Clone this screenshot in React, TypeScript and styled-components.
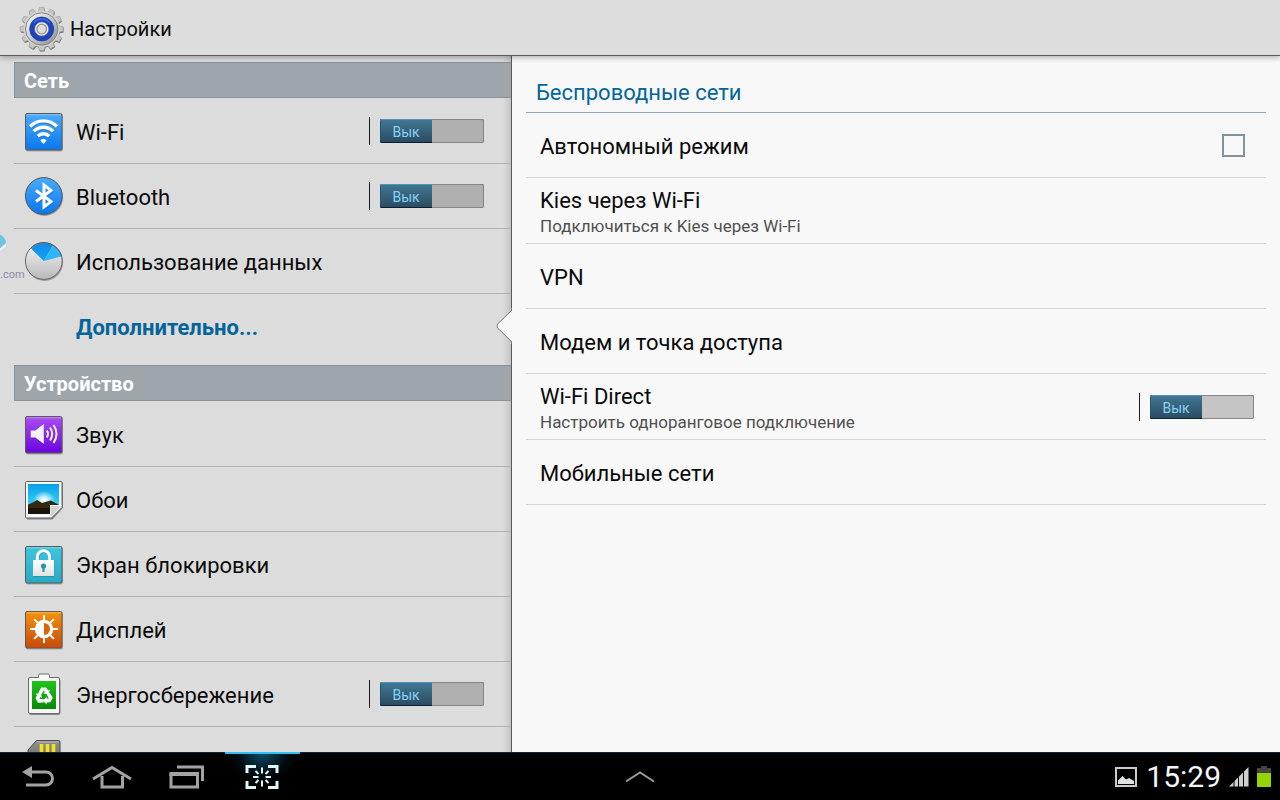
import React, { useState } from 'react';
import styled, { createGlobalStyle, css } from 'styled-components';

const GlobalStyle = createGlobalStyle`
  * { box-sizing: border-box; }
  body {
    margin: 0;
    background: #000;
    font-family: Roboto, "Noto Sans", sans-serif;
    color: #0a0a0a;
  }
  button { font-family: inherit; border: 0; padding: 0; margin: 0; background: none; cursor: pointer; }
  a { color: inherit; text-decoration: none; }
  ul { list-style: none; margin: 0; padding: 0; }
  h1, h2, p { margin: 0; }
  svg { display: block; flex: none; }
`;

const Screen = styled.div`
  display: flex;
  flex-direction: column;
  height: 100vh;
  position: relative;
  overflow: hidden;
`;

const TopBar = styled.header`
  flex: none;
  height: 56px;
  display: flex;
  align-items: center;
  gap: 6px;
  padding: 0 18px;
  background: #dddddd;
  border-bottom: 1px solid #5c5c5c;
  box-shadow: 0 1px 6px rgba(0, 0, 0, 0.35);
  position: relative;
  z-index: 2;
`;

const AppTitle = styled.h1`
  font-size: 20px;
  line-height: 24px;
  font-weight: 400;
  padding-top: 2px;
`;

const Panels = styled.div`
  flex: 1;
  min-height: 0;
  display: flex;
`;

const Sidebar = styled.nav`
  flex: 0 0 40%;
  padding-left: 14px;
  background: linear-gradient(to left, #5a5a5a 1px, #c4c4c4 1px, #dcdcdc 9px);
  overflow: hidden;
`;

const SectionTitle = styled.h2`
  height: 36px;
  margin: 6px 1px 1px 0;
  padding: 2px 0 0 9px;
  display: flex;
  align-items: center;
  background: #9ea6ac;
  border: 1px solid #879397;
  border-right: 0;
  color: #fff;
  font-size: 20px;
  line-height: 24px;
  font-weight: 700;
`;

const SidebarRow = styled.li<{ $last?: boolean }>`
  position: relative;
  height: 65px;
  margin-right: 1px;
  padding: 0 27px 0 10px;
  display: flex;
  align-items: center;
  border-bottom: 1px solid ${(p) => (p.$last ? 'transparent' : '#b0b0b0')};
`;

const ItemLink = styled.a<{ $active?: boolean }>`
  flex: 1;
  display: flex;
  align-items: center;
  gap: 12px;
  font-size: 22px;
  line-height: 28px;
  ${(p) => p.$active && css`
    color: #05659b;
    font-weight: 700;
  `}
`;

const ItemLabel = styled.span`
  padding-top: 4px;
`;

const IconSlot = styled.span`
  width: 40px;
  flex: none;
`;

const Pointer = styled.svg`
  position: absolute;
  right: -1px;
  top: 14px;
`;

const SwitchGroup = styled.div`
  display: flex;
  align-items: center;
  gap: 10px;
`;

const SwitchRule = styled.span`
  width: 1px;
  height: 28px;
  background: #1c1f22;
`;

const SwitchTrack = styled.button<{ $on: boolean; $light?: boolean }>`
  width: 104px;
  height: 24px;
  display: flex;
  justify-content: ${(p) => (p.$on ? 'flex-end' : 'flex-start')};
  border-radius: 2px;
  background: ${(p) => (p.$light ? '#c5c5c5' : '#afafaf')};
  box-shadow: inset 0 0 0 1px #858585, inset 0 1px 0 #6c6c6c;
`;

const SwitchThumb = styled.span`
  width: 52px;
  height: 24px;
  border-radius: 2px 0 0 2px;
  background: linear-gradient(#43789a, #3b6a84 30%, #2a4a60);
  box-shadow: inset 0 1px 0 #4f93b5, inset 0 -1px 0 #0c1e30, inset 1px 0 0 #1d5577;
  color: #86d3f7;
  font-size: 14px;
  line-height: 26px;
  text-align: center;
`;

const Detail = styled.main`
  flex: 1;
  min-width: 0;
  padding: 0 14px;
  background: #f8f8f8;
`;

const DetailTitle = styled.h2`
  height: 57px;
  padding: 0 10px 5px;
  display: flex;
  align-items: flex-end;
  border-bottom: 1px solid #8fa9b9;
  color: #05659b;
  font-size: 22px;
  line-height: 28px;
  font-weight: 400;
`;

const DetailRow = styled.li<{ $double?: boolean }>`
  height: ${(p) => (p.$double ? 66 : 65)}px;
  padding: 0 12px 0 14px;
  display: flex;
  align-items: center;
  border-bottom: 1px solid #d6d6d6;
`;

const detailText = css<{ $double?: boolean }>`
  flex: 1;
  padding-top: ${(p) => (p.$double ? 2 : 4)}px;
  font-size: 22px;
  line-height: 28px;
`;

const DetailLink = styled.a<{ $double?: boolean }>`
  ${detailText}
`;

const DetailLabel = styled.label<{ $double?: boolean }>`
  ${detailText}
`;

const Summary = styled.p`
  font-size: 17px;
  line-height: 22px;
  color: #505050;
`;

const CheckBox = styled.input`
  appearance: none;
  width: 23px;
  height: 23px;
  margin: 0 9px 0 0;
  border: 2px solid #84929b;
  &:checked { background: #84929b; }
`;

const SystemBar = styled.footer`
  flex: none;
  height: 48px;
  display: grid;
  grid-template-columns: 1fr auto 1fr;
  background: #000;
  box-shadow: inset 0 1px 0 #06243a;
  position: relative;
  z-index: 2;
`;

const NavKeys = styled.div`
  display: flex;
`;

const NavKey = styled.button<{ $lit?: boolean }>`
  width: 75px;
  height: 48px;
  display: flex;
  align-items: center;
  justify-content: center;
  padding: 2px 1px 0 0;
  ${(p) => p.$lit && css`
    background: radial-gradient(ellipse 36px 32px at 50% 0, #0d4f6c, rgba(0, 20, 30, 0.5) 70%, transparent);
    box-shadow: inset 0 2px 0 #2fbff2;
  `}
`;

const Status = styled.div`
  display: flex;
  align-items: center;
  justify-content: flex-end;
  padding: 2px 9px 0 0;
  gap: 8px;
`;

const Clock = styled.time`
  color: #f2f6f6;
  font-size: 30px;
  line-height: 36px;
  padding-left: 1px;
`;

const Watermark = styled.div`
  position: absolute;
  left: 0;
  top: 232px;
  z-index: 1;
  pointer-events: none;
  color: #8589aa;
  font-size: 11px;
  line-height: 14px;
`;

const WatermarkText = styled.span`
  display: block;
  padding-top: 16px;
`;

function Switch({ label, light }: { label: string; light?: boolean }) {
  const [on, setOn] = useState(false);
  return (
    <SwitchGroup>
      <SwitchRule />
      <SwitchTrack type="button" role="switch" aria-checked={on} aria-label={label} $on={on} $light={light} onClick={() => setOn(!on)}>
        <SwitchThumb>{on ? 'Вкл' : 'Вык'}</SwitchThumb>
      </SwitchTrack>
    </SwitchGroup>
  );
}

const HiddenDefs = styled.svg`
  position: absolute;
`;

function IconDefs() {
  const grads: [string, string, string][] = [
    ['gBlue', '#4aabff', '#0878ea'],
    ['gPurple', '#a950f4', '#6a04dc'],
    ['gCyan', '#3ec6de', '#28a9c6'],
    ['gOrange', '#f5920a', '#c74a0c'],
    ['gGreen', '#22c41c', '#078a08'],
    ['gGrey', '#f4f4f4', '#b9b9b9'],
    ['gSky', '#0a9fe6', '#35d4fb'],
    ['gPie', '#1589ea', '#0ba6f6'],
    ['gWhite', '#ffffff', '#e2e2e2'],
    ['gCard', '#8f8f8f', '#555555'],
  ];
  return (
    <HiddenDefs width="0" height="0" aria-hidden="true">
      <defs>
        {grads.map(([id, a, b]) => (
          <linearGradient key={id} id={id} x1="0" y1="0" x2="0" y2="1">
            <stop offset="0" stopColor={a} />
            <stop offset="1" stopColor={b} />
          </linearGradient>
        ))}
        <linearGradient id="gMetal" x1="0" y1="0" x2="1" y2="1">
          <stop offset="0" stopColor="#fbfbfb" />
          <stop offset="0.5" stopColor="#c9c9c9" />
          <stop offset="1" stopColor="#8b8b8b" />
        </linearGradient>
        <radialGradient id="gSun">
          <stop offset="0" stopColor="#fff" />
          <stop offset="0.3" stopColor="#fff" stopOpacity="0.8" />
          <stop offset="1" stopColor="#fff" stopOpacity="0" />
        </radialGradient>
      </defs>
    </HiddenDefs>
  );
}

function GearIcon() {
  const teeth = Array.from({ length: 12 }, (_, i) => i * 30);
  return (
    <svg width="46" height="48" viewBox="0 0 46 48" aria-hidden="true">
      <g transform="translate(24.2 26.2)" fill="#6f6f6f">
        {teeth.map((a) => <path key={a} transform={`rotate(${a})`} d="M-3.6-16 -2.4-21.4H2.4L3.6-16Z" />)}
        <circle r="17.6" />
      </g>
      <g transform="translate(23.7 25)">
        <g fill="#c6c6c6" stroke="#979797" strokeWidth="0.6">
          {teeth.map((a) => <path key={a} transform={`rotate(${a})`} d="M-3.6-16 -2.2-21.6H2.2L3.6-16Z" />)}
        </g>
        <circle r="18" fill="#d2d2d2" />
        <circle r="16.2" fill="url(#gMetal)" stroke="#858585" strokeWidth="1" />
        <circle r="12" fill="#1b43c2" stroke="#2b438c" strokeWidth="0.8" />
        <path d="M-8-6A10 10 0 0 1 8-6" fill="none" stroke="#3b6be0" strokeWidth="1.6" />
        <circle r="7" fill="#f0f0f0" stroke="#7b7f92" strokeWidth="0.6" />
        <circle r="4.8" fill="#dedede" stroke="#9b9388" strokeWidth="1.3" />
      </g>
    </svg>
  );
}

function Tile({ fill, children }: { fill: string; children: React.ReactNode }) {
  return (
    <svg width="40" height="44" viewBox="0 0 40 44" aria-hidden="true">
      <rect x="2" y="5.5" width="37" height="37" rx="2" fill="#8b8b8b" opacity="0.7" />
      <rect x="1.5" y="4.5" width="36.5" height="36.5" rx="1.5" fill={`url(#${fill})`} stroke="#5f5a55" />
      <path d="M2.5 5.8H37" stroke="#fff" strokeOpacity="0.35" />
      {children}
    </svg>
  );
}

const WifiIcon = () => (
  <Tile fill="gBlue">
    <g fill="none" stroke="#1568bd" strokeOpacity="0.5" strokeWidth="3.6" transform="translate(0 1)">
      <path d="M6 17.5a19 19 0 0 1 27 0M9.8 22.4a13.4 13.4 0 0 1 19.4 0M13.8 27.2a8 8 0 0 1 11.4 0" />
    </g>
    <g fill="none" stroke="#fff" strokeWidth="3.4">
      <path d="M6 17.5a19 19 0 0 1 27 0M9.8 22.4a13.4 13.4 0 0 1 19.4 0M13.8 27.2a8 8 0 0 1 11.4 0" />
    </g>
    <path d="M16.4 31.4a4 4 0 0 1 6.2 0L19.500 35Z" fill="#fff" />
  </Tile>
);

const BluetoothIcon = () => (
  <svg width="40" height="44" viewBox="0 0 40 44" aria-hidden="true">
    <circle cx="20.5" cy="23.3" r="18.6" fill="#8c8c8c" opacity="0.8" />
    <circle cx="19.8" cy="22" r="18.4" fill="url(#gBlue)" stroke="#5b5651" />
    <path d="M12 16.5 27 27.600 20 33V11L27 16.400 12 27.5" fill="none" stroke="#1463b5" strokeOpacity="0.5" strokeWidth="3.4" transform="translate(0.5 1)" />
    <path d="M12 16.5 27 27.600 20 33V11L27 16.400 12 27.5" fill="none" stroke="#fff" strokeWidth="3" />
  </svg>
);

const DataIcon = () => (
  <svg width="40" height="44" viewBox="0 0 40 44" aria-hidden="true">
    <circle cx="20.5" cy="23.3" r="18.6" fill="#8c8c8c" opacity="0.8" />
    <circle cx="19.8" cy="22" r="18.4" fill="url(#gGrey)" stroke="#6a655f" />
    <path d="M19.8 22 7 9.4A18 18 0 0 1 29 6.5Z" fill="url(#gPie)" />
    <path d="M19.8 22 29 6.5A18 18 0 0 1 37.2 17.6Z" fill="#2db7fa" />
    <path d="M6.8 9A18.4 18.4 0 0 1 37.4 17" fill="none" stroke="#5b5651" />
  </svg>
);

const SoundIcon = () => (
  <Tile fill="gPurple">
    <path d="M7.5 19.500h4.500L20 13V33l-8-6.500H7.500Z" fill="#3c0b86" opacity="0.5" />
    <path d="M6.800 18.500h4.500L19.800 12V32l-8.500-6.500H6.800Z" fill="#f6f2fb" />
    <path d="M22.800 18.500q2.400 3.400 0 7M26 15.500q4.400 6.300 0 13M29.500 13q6 8.800 0 18" fill="none" stroke="#f6f2fb" strokeWidth="2" />
  </Tile>
);

const WallpaperIcon = () => (
  <svg width="40" height="44" viewBox="0 0 40 44" aria-hidden="true">
    <path d="M2 5.5H39V31L28.5 42.5H3Z" fill="#858585" />
    <path d="M1.5 5.5a1 1 0 0 1 1-1H37a1 1 0 0 1 1 1V30.5L27.5 41H2.5a1 1 0 0 1-1-1Z" fill="#f7f7f7" stroke="#5f5f5f" />
    <rect x="4" y="7" width="31" height="22" fill="url(#gSky)" />
    <ellipse cx="20" cy="23" rx="11" ry="9" fill="url(#gSun)" />
    <path d="M4 27.5 9 25.5 13 23 18 26 23 24.5 27 23.5 35 28V28.5H26V37H4Z" fill="#33270f" />
    <path d="M4 31H26V37H4Z" fill="#171309" />
    <path d="M26.5 40.5V28.5H37.5Z" fill="#d3d3d3" />
    <path d="M26 28.5H37.5" stroke="#fff" />
  </svg>
);

const LockIcon = () => (
  <Tile fill="gCyan">
    <path d="M13.7 20V15.500a6.200 6.200 0 0 1 12.400 0V20" fill="none" stroke="#1b7f98" strokeOpacity="0.6" strokeWidth="3.400" />
    <path d="M13.300 19V15a6.200 6.200 0 0 1 12.400 0V19" fill="none" stroke="#fff" strokeWidth="3" />
    <rect x="9" y="18.5" width="21.5" height="16.5" fill="#2386a0" opacity="0.6" />
    <rect x="9" y="18" width="21" height="16" fill="url(#gWhite)" />
    <circle cx="19.5" cy="24" r="2.6" fill="#2496b2" />
    <path d="M19.5 24V30" stroke="#2496b2" strokeWidth="2.2" />
  </Tile>
);

const DisplayIcon = () => (
  <Tile fill="gOrange">
    <g transform="translate(20 22)">
      <g stroke="#fff" strokeWidth="2">
        {[0, 45, 90, 135, 180, 225, 270, 315].map((a) => <path key={a} transform={`rotate(${a})`} d="M0-9V-14" />)}
      </g>
      <circle r="9.2" fill="#fff" />
      <path d="M0-6A6 6 0 0 1 0 6Z" fill="#d9660c" />
    </g>
  </Tile>
);

const BatteryIcon = () => (
  <svg width="40" height="44" viewBox="0 0 40 44" aria-hidden="true">
    <rect x="5" y="7" width="31.5" height="36" rx="2" fill="#888" />
    <path d="M6 5.5H14.5V3.5q0-1.5 1.5-1.5h8q1.5 0 1.5 1.5v2H34q1.5 0 1.5 1.5V40q0 1.5-1.5 1.5H6q-1.5 0-1.5-1.5V7Q4.5 5.5 6 5.5Z" fill="#f7f7f7" stroke="#6b6b6b" />
    <rect x="8" y="9" width="24" height="28" fill="url(#gGreen)" />
    <g transform="translate(20 24)" fill="#fff">
      {[0, 120, 240].map((a) => (
        <path key={a} transform={`rotate(${a})`} d="M-5.5-3.5-2.8-8.5H2.2L4.2-5.5 6-6.5 4.5-1.2-.8-2.7 1-3.7-.3-5.5-2.4-1.8Z" />
      ))}
    </g>
  </svg>
);

const StorageIcon = () => (
  <svg width="40" height="44" viewBox="0 0 40 44" aria-hidden="true">
    <path d="M12.5 3.5H34.5a1.5 1.5 0 0 1 1.5 1.5V41H4V13Z" fill="url(#gCard)" stroke="#4a4a4a" />
    <path d="M13 5H34.5" stroke="#bbb" />
    <path d="M17.5 7V18M23.5 7V18M29.5 7V18" stroke="#f4e21c" strokeWidth="3.6" />
  </svg>
);

function SidebarItem({ icon, label, toggle, active, last }: {
  icon?: React.ReactNode; label: string; toggle?: boolean; active?: boolean; last?: boolean;
}) {
  return (
    <SidebarRow $last={last}>
      <ItemLink href="#" $active={active} aria-current={active ? 'page' : undefined}>
        <IconSlot>{icon}</IconSlot>
        <ItemLabel>{label}</ItemLabel>
      </ItemLink>
      {toggle && <Switch label={label} />}
      {active && (
        <Pointer width="17" height="36" viewBox="0 0 17 36" aria-hidden="true">
          <path d="M17 2.5 3.5 15.5Q1 18 3.5 20.5L17 33.5Z" fill="#f8f8f8" />
          <path d="M16.5 0V2.5L3 15.5Q1 18 3 20.5L16.5 33.5V36" fill="none" stroke="#7b7b7b" />
        </Pointer>
      )}
    </SidebarRow>
  );
}

export default function App() {
  return (
    <Screen>
      <GlobalStyle />
      <IconDefs />
      <TopBar>
        <GearIcon />
        <AppTitle>Настройки</AppTitle>
      </TopBar>

      <Panels>
        <Sidebar>
          <SectionTitle>Сеть</SectionTitle>
          <ul>
            <SidebarItem icon={<WifiIcon />} label="Wi-Fi" toggle />
            <SidebarItem icon={<BluetoothIcon />} label="Bluetooth" toggle />
            <SidebarItem icon={<DataIcon />} label="Использование данных" />
            <SidebarItem label="Дополнительно..." active last />
          </ul>
          <SectionTitle>Устройство</SectionTitle>
          <ul>
            <SidebarItem icon={<SoundIcon />} label="Звук" />
            <SidebarItem icon={<WallpaperIcon />} label="Обои" />
            <SidebarItem icon={<LockIcon />} label="Экран блокировки" />
            <SidebarItem icon={<DisplayIcon />} label="Дисплей" />
            <SidebarItem icon={<BatteryIcon />} label="Энергосбережение" toggle />
            <SidebarItem icon={<StorageIcon />} label="" />
          </ul>
        </Sidebar>

        <Detail>
          <DetailTitle>Беспроводные сети</DetailTitle>
          <ul>
            <DetailRow>
              <DetailLabel htmlFor="offline">Автономный режим</DetailLabel>
              <CheckBox id="offline" type="checkbox" />
            </DetailRow>
            <DetailRow $double>
              <DetailLink href="#" $double>
                Kies через Wi-Fi
                <Summary>Подключиться к Kies через Wi-Fi</Summary>
              </DetailLink>
            </DetailRow>
            <DetailRow><DetailLink href="#">VPN</DetailLink></DetailRow>
            <DetailRow><DetailLink href="#">Модем и точка доступа</DetailLink></DetailRow>
            <DetailRow $double>
              <DetailLink href="#" $double>
                Wi-Fi Direct
                <Summary>Настроить одноранговое подключение</Summary>
              </DetailLink>
              <Switch label="Wi-Fi Direct" light />
            </DetailRow>
            <DetailRow><DetailLink href="#">Мобильные сети</DetailLink></DetailRow>
          </ul>
        </Detail>
      </Panels>

      <Watermark aria-hidden="true">
        <svg width="8" height="20" viewBox="0 0 8 20">
          <path d="M0 16 6 11V14L0 19Z" fill="#f2f6f8" />
          <path d="M0 2.5Q6 6 6 11L0 16.500Z" fill="#6fc4e2" />
        </svg>
        <WatermarkText>.com</WatermarkText>
      </Watermark>

      <SystemBar>
        <NavKeys>
          <NavKey type="button" aria-label="Назад">
            <svg width="34" height="24" viewBox="0 0 34 24" aria-hidden="true">
              <path d="M10 7H26a6.500 6.500 0 0 1 0 13H6" fill="none" stroke="#a3a3a3" strokeWidth="3" />
              <path d="M2 7 12 1V13Z" fill="#a3a3a3" />
            </svg>
          </NavKey>
          <NavKey type="button" aria-label="Домой">
            <svg width="40" height="24" viewBox="0 0 40 24" aria-hidden="true">
              <path d="M1 14 20 2.5 39 14M10 11V22H30.5V11" fill="none" stroke="#a3a3a3" strokeWidth="3" />
            </svg>
          </NavKey>
          <NavKey type="button" aria-label="Недавние приложения">
            <svg width="36" height="24" viewBox="0 0 36 24" aria-hidden="true">
              <path d="M8 2H33.5V16" fill="none" stroke="#a3a3a3" strokeWidth="3" />
              <path d="M2 8V22H28.5V8" fill="none" stroke="#a3a3a3" strokeWidth="3" />
              <path d="M0.5 9H30" stroke="#a3a3a3" strokeWidth="4" />
            </svg>
          </NavKey>
          <NavKey type="button" aria-label="Снимок экрана" $lit>
            <svg width="34" height="24" viewBox="0 0 34 24" fill="none" stroke="#dff8fb" aria-hidden="true">
              <path d="M2 8V1.5H11M23 1.5H32V8M32 16V22.5H23M11 22.5H2V16" strokeWidth="3" />
              <path d="M17 2.5V8.5M17 15.5V21.5M8 12H13.5M20.5 12H26M10.5 6 13.5 9M23.5 6 20.5 9M10.5 18 13.5 15M23.5 18 20.5 15" strokeWidth="2" />
            </svg>
          </NavKey>
        </NavKeys>
        <NavKey type="button" aria-label="Мини-приложения">
          <svg width="30" height="14" viewBox="0 0 30 14" aria-hidden="true">
            <path d="M1 11.500 15 2.500 29 11.500" fill="none" stroke="#9a9a9a" strokeWidth="2" />
          </svg>
        </NavKey>
        <Status>
          <svg width="22" height="20" viewBox="0 0 22 20" aria-hidden="true">
            <rect x="1" y="1" width="20" height="18" fill="none" stroke="#c9cccc" strokeWidth="2" />
            <path d="M3 17V13.5L7.5 9 11 12.5 14 11 19 14V17Z" fill="#dce2e2" />
          </svg>
          <Clock>15:29</Clock>
          <svg width="20" height="20" viewBox="0 0 20 20" aria-hidden="true">
            <path d="M0 19.5 19.5 0V19.5Z" fill="#cfcfcf" />
            <path d="M5 10V20M9.5 5V20M14.5 0V20" stroke="#000" strokeWidth="1" />
          </svg>
          <svg width="14" height="22" viewBox="0 0 14 22" aria-hidden="true">
            <path d="M0 2H4V0H10V2H14V7H0Z" fill="#454545" />
            <rect y="7" width="14" height="14" fill="#96d502" />
          </svg>
        </Status>
      </SystemBar>
    </Screen>
  );
}
